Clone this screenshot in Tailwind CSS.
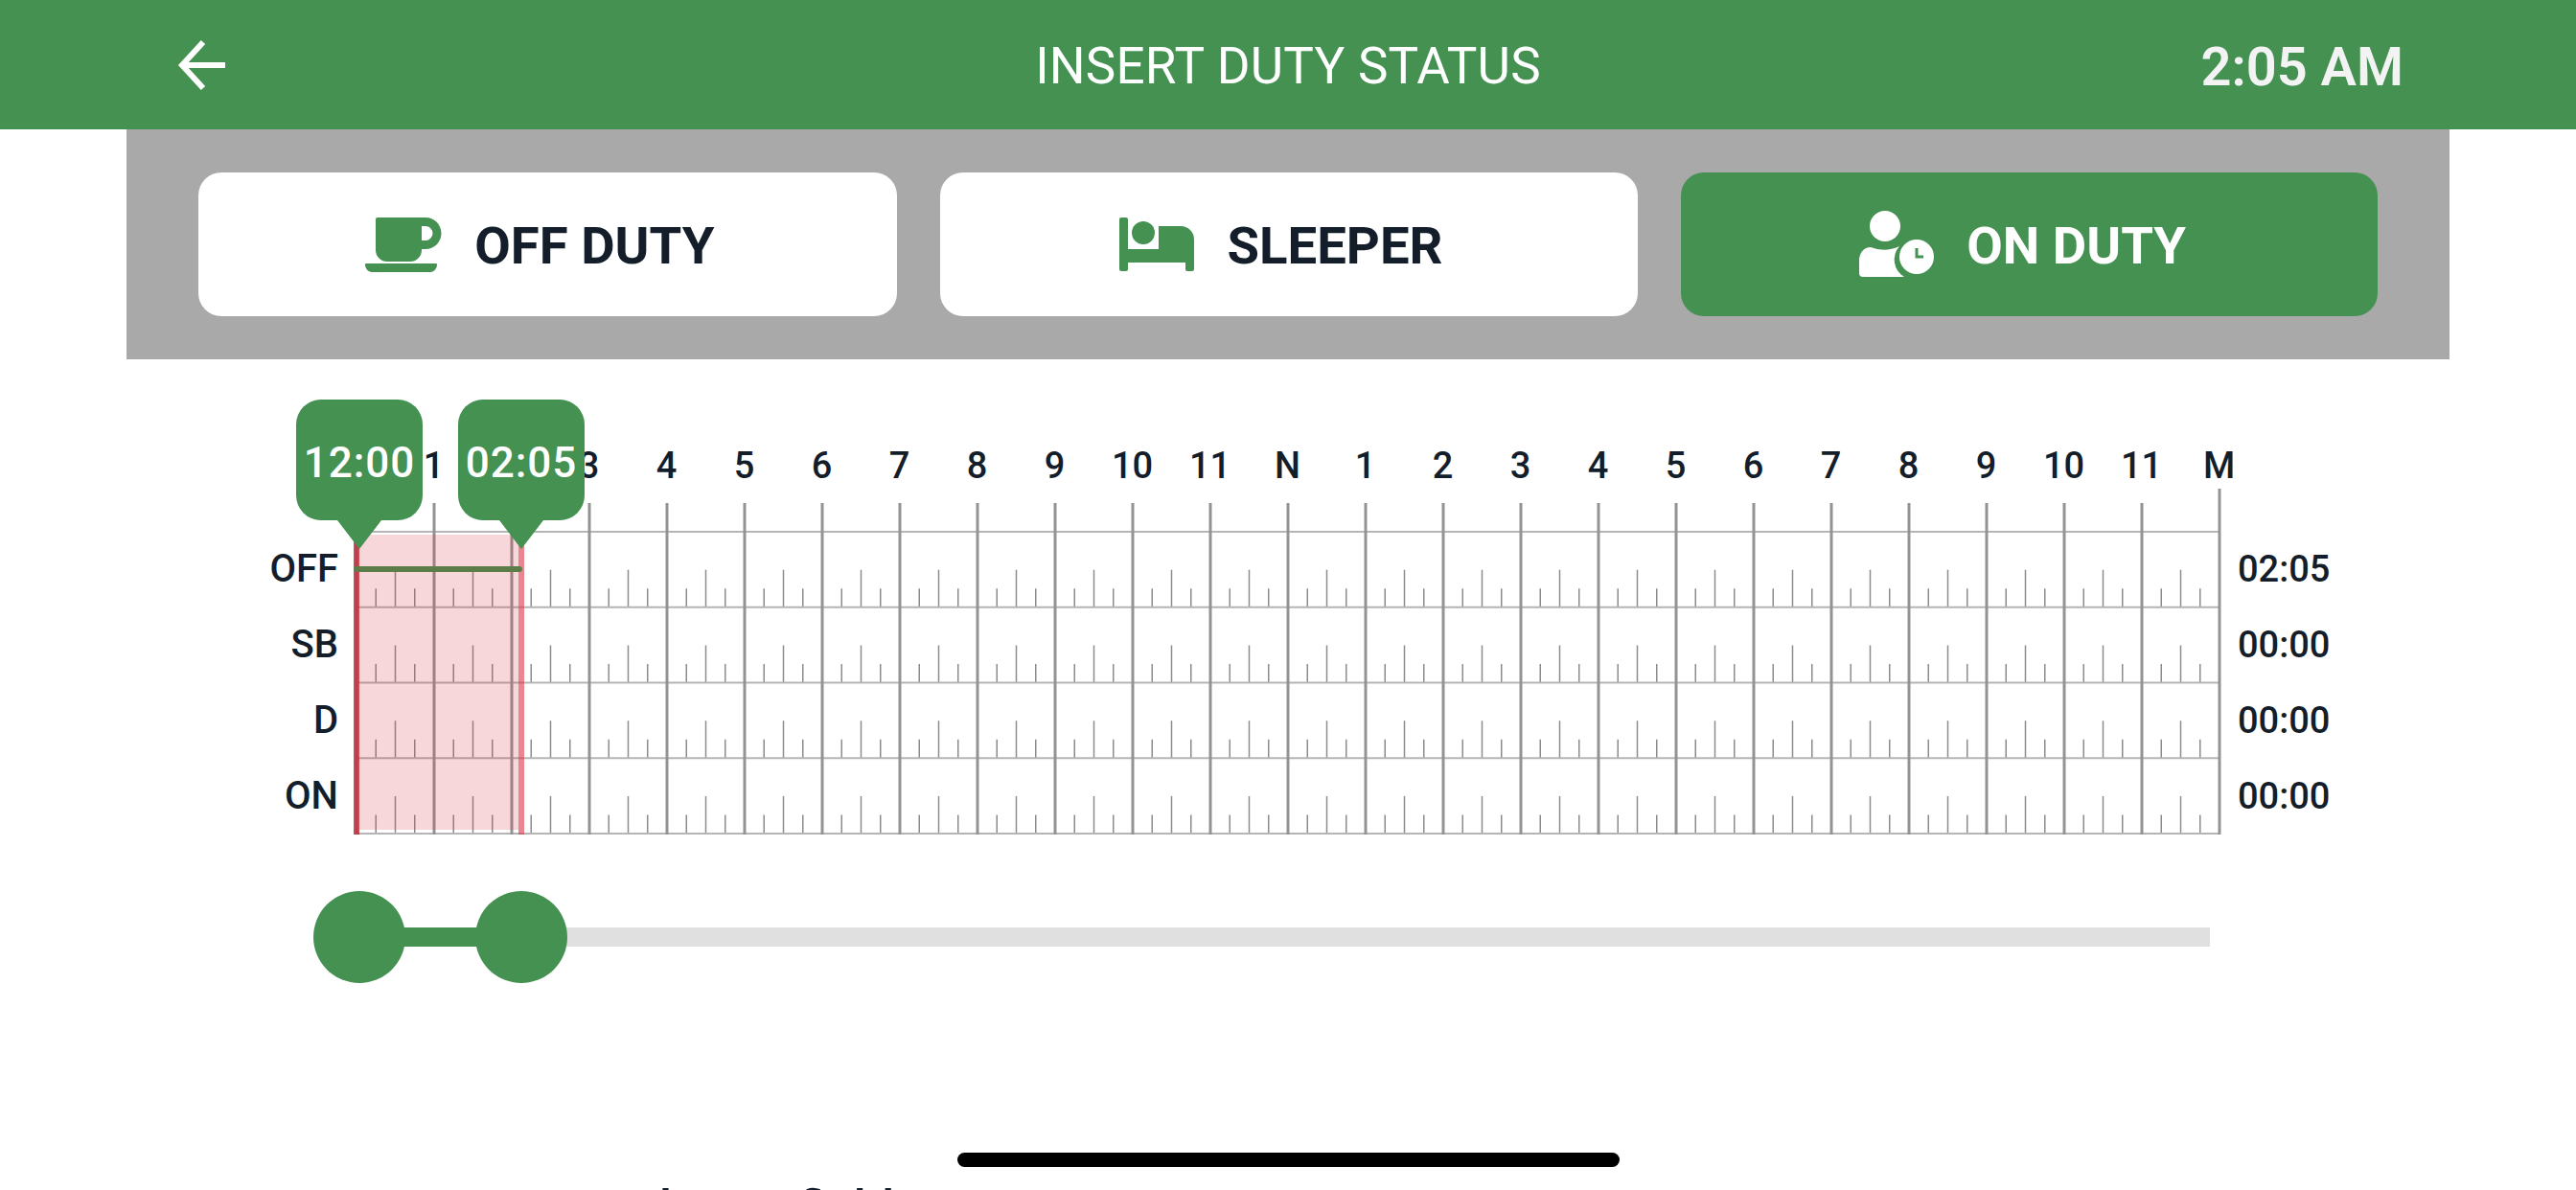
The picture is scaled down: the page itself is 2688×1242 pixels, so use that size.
<!DOCTYPE html>
<html lang="en">
<head>
  <meta charset="UTF-8" />
  <title>Insert Duty Status</title>
  <script src="https://cdn.jsdelivr.net/npm/@tailwindcss/browser@4"></script>
</head>
<body class="bg-white">
<div class="relative w-[2688px] h-[1242px] overflow-hidden bg-white text-[#141e2b] [font-family:Roboto,sans-serif]">

  <!-- header -->
  <header class="grid grid-cols-[1fr_auto_1fr] items-center h-[135px] bg-[#449152] text-white">
    <div class="pl-[185px]">
      <svg width="54" height="54" viewBox="0 0 54 54" fill="none" stroke="currentColor" stroke-width="6"><path d="M27 3 L5 27 L27 51 M5 27 H50"/></svg>
    </div>
    <h1 class="pt-[3px] text-[53px] leading-none tracking-[0.2px]">INSERT DUTY STATUS</h1>
    <div class="pr-[180px] pt-[5px] text-right text-[56px] leading-none font-semibold text-[#f3f3f3]">2:05 AM</div>
  </header>

  <!-- status buttons -->
  <div class="flex gap-[45px] mx-[132px] h-[240px] px-[75px] py-[45px] bg-[#a9a9a9]">
    <button class="flex flex-1 items-center justify-center gap-[34px] pr-[16px] rounded-[24px] bg-white text-[54.5px] font-bold">
      <svg width="80" height="57" viewBox="0 0 80 57" fill="#449152" fill-rule="evenodd"><path d="M13 0 H63 a16.5 16.5 0 0 1 0 33 H59 v1 a12 12 0 0 1 -12 12 H23 a12 12 0 0 1 -12 -12 V2 a2 2 0 0 1 2 -2z M59 9 v15 h4 a7.5 7.5 0 0 0 0 -15z"/><path d="M1 48 H74 a1 1 0 0 1 1 1 c0 4 -3 8 -7 8 H7 c-4 0 -7 -4 -7 -8 a1 1 0 0 1 1 -1z"/></svg>
      <span class="pt-[4px]">OFF DUTY</span>
    </button>
    <button class="flex flex-1 items-center justify-center gap-[34px] pr-[16px] rounded-[24px] bg-white text-[54.5px] font-bold">
      <svg width="78" height="56" viewBox="0 0 78 56" fill="#449152"><path d="M2 0 h5 a2 2 0 0 1 2 2 V33 H41 V9 H64 a14 14 0 0 1 14 14 V54 a2 2 0 0 1 -2 2 h-5 a2 2 0 0 1 -2 -2 V47 H9 V54 a2 2 0 0 1 -2 2 H2 a2 2 0 0 1 -2 -2 V2 a2 2 0 0 1 2 -2z"/><circle cx="25" cy="16" r="12"/></svg>
      <span class="pt-[4px]">SLEEPER</span>
    </button>
    <button class="flex flex-1 items-center justify-center gap-[34px] pr-[14px] rounded-[24px] bg-[#449152] text-[54.5px] font-bold text-white">
      <svg width="78" height="70" viewBox="0 0 78 70" fill="#fff"><circle cx="27" cy="16" r="16"/><path d="M12 38 Q27 44 42 37 A21 21 0 0 0 47 69 H4 a4 4 0 0 1 -4 -4 V52 C0 44 5 38 12 38z"/><circle cx="60" cy="48" r="18"/><path d="M60 39 V48 H67" fill="none" stroke="#449152" stroke-width="3"/></svg>
      <span class="pt-[4px]">ON DUTY</span>
    </button>
  </div>

  <!-- duty chart -->
  <section class="relative pt-[90px] text-[38px] leading-none font-medium">
    <div class="flex pl-[331px] pt-[2px] h-[40px] items-center">
      <span class="w-[81px] text-center">M</span>
      <span class="w-[81px] text-center">1</span>
      <span class="w-[81px] text-center">2</span>
      <span class="w-[81px] text-center">3</span>
      <span class="w-[81px] text-center">4</span>
      <span class="w-[81px] text-center">5</span>
      <span class="w-[81px] text-center">6</span>
      <span class="w-[81px] text-center">7</span>
      <span class="w-[81px] text-center">8</span>
      <span class="w-[81px] text-center">9</span>
      <span class="w-[81px] text-center">10</span>
      <span class="w-[81px] text-center">11</span>
      <span class="w-[81px] text-center">N</span>
      <span class="w-[81px] text-center">1</span>
      <span class="w-[81px] text-center">2</span>
      <span class="w-[81px] text-center">3</span>
      <span class="w-[81px] text-center">4</span>
      <span class="w-[81px] text-center">5</span>
      <span class="w-[81px] text-center">6</span>
      <span class="w-[81px] text-center">7</span>
      <span class="w-[81px] text-center">8</span>
      <span class="w-[81px] text-center">9</span>
      <span class="w-[81px] text-center">10</span>
      <span class="w-[81px] text-center">11</span>
      <span class="w-[81px] text-center">M</span>
    </div>

    <div class="flex">
      <div class="flex flex-col w-[353px] pt-[50px] text-[40px]">
        <div class="h-[78.75px] flex items-center justify-end">OFF</div>
        <div class="h-[78.75px] flex items-center justify-end">SB</div>
        <div class="h-[78.75px] flex items-center justify-end">D</div>
        <div class="h-[78.75px] flex items-center justify-end">ON</div>
      </div>
      <svg id="grid" class="ml-[15px] shrink-0" width="1952" height="370" viewBox="368 505 1952 370"></svg>
      <div class="flex flex-col ml-[15px] pt-[50px]">
        <div class="h-[78.75px] flex items-center">02:05</div>
        <div class="h-[78.75px] flex items-center">00:00</div>
        <div class="h-[78.75px] flex items-center">00:00</div>
        <div class="h-[78.75px] flex items-center">00:00</div>
      </div>
    </div>

    <!-- time bubbles over the chart -->
    <div class="absolute left-[309px] top-[42px] flex flex-col items-center">
      <div class="flex items-center justify-center w-[132px] h-[126px] pt-[6px] rounded-[26px] bg-[#449152] text-[44px] tracking-[1px] text-white">12:00</div>
      <div class="w-0 h-0 border-x-[23px] border-x-transparent border-t-[30px] border-t-[#449152]"></div>
    </div>
    <div class="absolute left-[478px] top-[42px] flex flex-col items-center">
      <div class="flex items-center justify-center w-[132px] h-[126px] pt-[6px] rounded-[26px] bg-[#449152] text-[44px] tracking-[1px] text-white">02:05</div>
      <div class="w-0 h-0 border-x-[23px] border-x-transparent border-t-[30px] border-t-[#449152]"></div>
    </div>
  </section>

  <!-- range slider -->
  <div class="relative ml-[375px] mt-[93px] w-[1931px] h-[20px] bg-[#e0e0e0]">
    <div class="absolute left-0 top-0 w-[169px] h-full bg-[#449152]"></div>
    <div class="absolute -left-[48px] -top-[38px] size-[96px] rounded-full bg-[#449152]"></div>
    <div class="absolute left-[121px] -top-[38px] size-[96px] rounded-full bg-[#449152]"></div>
  </div>

  <!-- cut off by the bottom of the screen -->
  <p class="ml-[569px] mt-[248px] text-[52px] leading-none font-medium whitespace-nowrap">Mandatory fields</p>

  <!-- home indicator -->
  <div class="absolute left-[999px] top-[1203px] w-[691px] h-[15px] rounded-full bg-black"></div>
</div>

<script>
  // grid lines + 15 min ticks
  const X0 = 372, HOUR = 81, TOP = 555, ROW = 78.75, BOTTOM = 870;
  let svg = "";

  for (let r = 0; r < 4; r++) {
    const base = TOP + ROW * (r + 1);
    for (let h = 0; h < 24; h++) {
      [[1, 19.5], [2, 39], [3, 19.5]].forEach(([q, len]) => {
        const x = X0 + h * HOUR + q * HOUR / 4;
        svg += `<line x1="${x}" x2="${x}" y1="${base - len}" y2="${base}" stroke="#8c8c8c" stroke-width="1.5"/>`;
      });
    }
  }
  for (let r = 0; r <= 4; r++) {
    const y = TOP + ROW * r;
    svg += `<line x1="${X0}" x2="${X0 + 24 * HOUR}" y1="${y}" y2="${y}" stroke="#b5b5b5" stroke-width="2"/>`;
  }
  for (let h = 0; h <= 24; h++) {
    const x = X0 + h * HOUR;
    svg += `<line x1="${x}" x2="${x}" y1="${h === 24 ? 510 : 525}" y2="${BOTTOM + 1}" stroke="#939393" stroke-width="3"/>`;
  }

  // selected range
  svg += `<rect x="375" y="558" width="166" height="308" fill="#dc3545" fill-opacity=".2"/>`;
  svg += `<rect x="369" y="540" width="6" height="331" fill="#c22f3c" fill-opacity=".85"/>`;
  svg += `<rect x="541" y="540" width="6" height="331" fill="#dc3545" fill-opacity=".6"/>`;
  svg += `<line x1="372" x2="542" y1="594" y2="594" stroke="#5c7d48" stroke-width="6" stroke-linecap="round"/>`;

  document.getElementById("grid").innerHTML = svg;
</script>
</body>
</html>
